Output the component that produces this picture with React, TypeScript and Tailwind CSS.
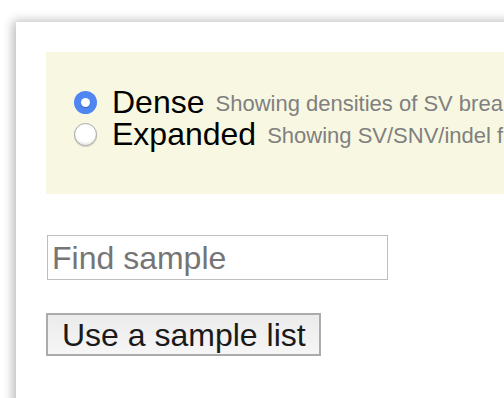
import { useState } from 'react';

type Mode = 'dense' | 'expanded';

function Radio({ checked, onClick }: { checked: boolean; onClick: () => void }) {
  return (
    <button
      type="button"
      onClick={onClick}
      className={
        checked
          ? 'w-[23px] h-[23px] shrink-0 rounded-full bg-[#4f86f2] flex items-center justify-center'
          : 'w-[23px] h-[23px] shrink-0 rounded-full bg-white border border-[#a8a8a8] shadow-[inset_0_-2px_2px_rgba(0,0,0,0.08),0_1px_1px_rgba(0,0,0,0.15)]'
      }
    >
      {checked && <span className="block w-[9px] h-[9px] rounded-full bg-white shadow-[0_1px_1px_rgba(0,0,0,0.25)]" />}
    </button>
  );
}

export default function App() {
  const [mode, setMode] = useState<Mode>('dense');

  return (
    <div className="w-[504px] h-[398px] overflow-hidden bg-white font-['Liberation_Sans',Arial,sans-serif]">
      <div className="ml-[16px] mt-[22px] w-[600px] h-[420px] bg-white shadow-[-3px_-1px_10px_rgba(0,0,0,0.28)] pl-[30px] pt-[30px]">
        {/* display mode */}
        <div className="w-[560px] h-[142px] bg-[#f8f8e2] pl-[28px] pt-[34px] whitespace-nowrap">
          <div className="flex items-center h-[32px]">
            <Radio checked={mode === 'dense'} onClick={() => setMode('dense')} />
            <span className="ml-[15px] text-[32px] leading-[32px] text-black">Dense</span>
            <span className="ml-[11px] text-[22px] leading-[28px] text-[#808080] pt-[4px]">
              Showing densities of SV breakpoints and SNV/indel
            </span>
          </div>
          <div className="flex items-center h-[32px]">
            <Radio checked={mode === 'expanded'} onClick={() => setMode('expanded')} />
            <span className="ml-[15px] text-[32px] leading-[32px] text-black">Expanded</span>
            <span className="ml-[11px] text-[22px] leading-[28px] text-[#808080] pt-[4px]">
              Showing SV/SNV/indel for every sample
            </span>
          </div>
        </div>

        <input
          placeholder="Find sample"
          className="block mt-[41px] ml-[1px] w-[341px] h-[45px] border border-[#bdbdbd] px-[4px] text-[32px] text-black placeholder:text-[#757575] outline-none"
        />

        <button
          type="button"
          className="block mt-[33px] w-[275px] h-[43px] border-2 border-[#ababab] bg-gradient-to-b from-[#ebebeb] to-[#f6f6f6] text-[32px] leading-[32px] text-[#1a1a1a] pl-[14px] text-left"
        >
          Use a sample list
        </button>
      </div>
    </div>
  );
}
